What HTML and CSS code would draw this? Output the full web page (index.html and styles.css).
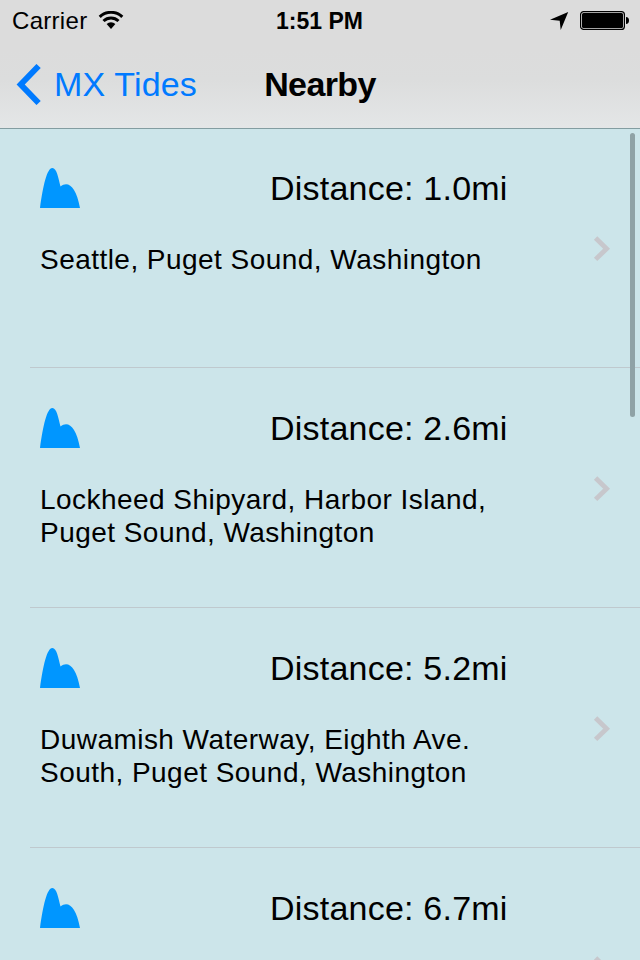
FILE: index.html
```
<!DOCTYPE html>
<html lang="en">
<head>
<meta charset="utf-8">
<title>Nearby</title>
<link rel="stylesheet" href="styles.css">
</head>
<body>
<div class="screen">
  <header class="header">
    <div class="status">
      <div class="status-left">
        <span class="carrier">Carrier</span>
        <svg class="wifi" width="26" height="18" viewBox="0 0 26 18">
          <g fill="none" stroke="#000" stroke-width="3">
            <path d="M1.700 5.800a16.500 16.500 0 0 1 22.600 0"/>
            <path d="M5.500 10a11 11 0 0 1 15 0"/>
          </g>
          <path d="M8.600 13a6.600 6.600 0 0 1 8.800 0L13 17.900z"/>
        </svg>
      </div>
      <span class="time">1:51 PM</span>
      <div class="status-right">
        <svg class="location" width="19" height="18" viewBox="0 0 19 18"><path d="M0 7.700L18.200 0L10.700 18L9.700 8.700z"/></svg>
        <svg class="battery" width="49" height="20" viewBox="0 0 49 20">
          <rect x="0.600" y="0.600" width="43.800" height="17.800" rx="3" fill="none" stroke="#000" stroke-width="1.200"/>
          <rect x="2" y="2" width="41" height="15" rx="1.500"/>
          <path d="M46 6c2 0 3 1.500 3 3.500s-1 3.500-3 3.500z"/>
        </svg>
      </div>
    </div>
    <nav class="nav">
      <div class="back">
        <svg class="back-arrow" width="25" height="41" viewBox="0 0 25 41"><path d="M22.600 2L4.700 20.500L22.600 39" fill="none" stroke="#007aff" stroke-width="5.900"/></svg>
        <span class="back-label">MX Tides</span>
      </div>
      <h1 class="title">Nearby</h1>
    </nav>
  </header>
  <main class="list">
    <div class="row">
      <div class="content">
        <div class="top"><svg class="tide" width="40" height="40" viewBox="0 0 40 40"><path d="M0 40C3 18 7 0 12.300 0C16.800 0 18.300 10 20.500 18.500C28 12.500 36 18 40 40z"/></svg><span class="distance">Distance: 1.0mi</span></div>
        <p class="place">Seattle, Puget Sound, Washington</p>
      </div>
      <svg class="chevron" width="18" height="26" viewBox="0 0 18 26"><path d="M2.600 2L13.600 12.700L2.600 23.400"/></svg>
    </div>
    <div class="row">
      <div class="content">
        <div class="top"><svg class="tide" width="40" height="40" viewBox="0 0 40 40"><path d="M0 40C3 18 7 0 12.300 0C16.800 0 18.300 10 20.500 18.500C28 12.500 36 18 40 40z"/></svg><span class="distance">Distance: 2.6mi</span></div>
        <p class="place">Lockheed Shipyard, Harbor Island,<br>Puget Sound, Washington</p>
      </div>
      <svg class="chevron" width="18" height="26" viewBox="0 0 18 26"><path d="M2.600 2L13.600 12.700L2.600 23.400"/></svg>
    </div>
    <div class="row">
      <div class="content">
        <div class="top"><svg class="tide" width="40" height="40" viewBox="0 0 40 40"><path d="M0 40C3 18 7 0 12.300 0C16.800 0 18.300 10 20.500 18.500C28 12.500 36 18 40 40z"/></svg><span class="distance">Distance: 5.2mi</span></div>
        <p class="place">Duwamish Waterway, Eighth Ave.<br>South, Puget Sound, Washington</p>
      </div>
      <svg class="chevron" width="18" height="26" viewBox="0 0 18 26"><path d="M2.600 2L13.600 12.700L2.600 23.400"/></svg>
    </div>
    <div class="row">
      <div class="content">
        <div class="top"><svg class="tide" width="40" height="40" viewBox="0 0 40 40"><path d="M0 40C3 18 7 0 12.300 0C16.800 0 18.300 10 20.500 18.500C28 12.500 36 18 40 40z"/></svg><span class="distance">Distance: 6.7mi</span></div>
      </div>
      <svg class="chevron" width="18" height="26" viewBox="0 0 18 26"><path d="M2.600 2L13.600 12.700L2.600 23.400"/></svg>
    </div>
  </main>
  <div class="scrollbar"></div>
</div>
</body>
</html>
```
FILE: styles.css
```
* { box-sizing: border-box; }
body {
  margin: 0;
  font-family: "Liberation Sans", Arial, sans-serif;
  color: #000;
}
.screen {
  position: relative;
  width: 640px;
  height: 960px;
  overflow: hidden;
  background: #cce5ea;
}
.header {
  height: 129px;
  background: linear-gradient(#dcdcdc 0, #dcdcdc 50px, #dcdddd 80px, #e4e6e7 128px);
  border-bottom: 1px solid #839da1;
}
.status {
  display: grid;
  grid-template-columns: 1fr auto 1fr;
  height: 40px;
  padding: 0 11px 0 12px;
  font-size: 24px;
  line-height: 42px;
  white-space: nowrap;
}
.status-left, .status-right { display: flex; align-items: flex-start; }
.status-right { justify-content: flex-end; }
.carrier { width: 86px; letter-spacing: 0.3px; }
.wifi { margin-top: 11px; }
.time { margin-left: -2px; font-weight: bold; font-size: 23px; }
.location { margin: 12px 11px 0 0; }
.battery { margin: 11px 0 0; }
.nav {
  display: grid;
  grid-template-columns: 1fr auto 1fr;
  height: 88px;
  padding: 0 16px;
  font-size: 34px;
  line-height: 88px;
  white-space: nowrap;
}
.back { display: flex; align-items: center; color: #007aff; }
.back-arrow { margin-right: 13px; }
.back-label { letter-spacing: 0.15px; }
.title { margin: 0; font-size: 34px; font-weight: bold; letter-spacing: -0.6px; }
.list { margin-top: -1px; }
.row {
  display: flex;
  height: 240px;
  margin-left: 30px;
  padding-left: 10px;
  border-bottom: 1px solid #bfc9ce;
}
.content { width: 553px; padding-top: 40px; }
.top { display: flex; height: 40px; }
.tide { fill: #0096ff; }
.distance {
  margin-left: 190px;
  font-size: 34px;
  line-height: 40px;
  letter-spacing: 0.22px;
}
.place {
  margin: 35px 0 0;
  font-size: 28px;
  line-height: 33px;
  letter-spacing: 0.46px;
  white-space: nowrap;
}
.chevron {
  flex: none;
  margin-top: 108px;
  fill: none;
  stroke: #c7c7cc;
  stroke-width: 4.800;
}
.scrollbar {
  position: absolute;
  top: 133px;
  right: 5px;
  width: 5px;
  height: 284px;
  border-radius: 3px;
  background: #8fa2a6;
}
```
